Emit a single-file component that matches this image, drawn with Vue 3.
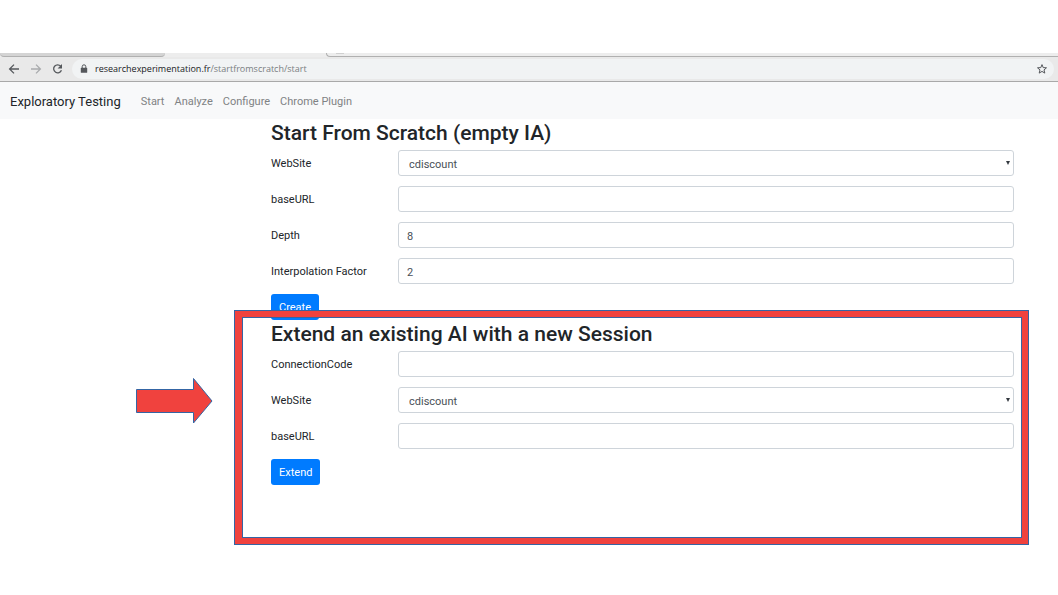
<script setup>
import { ref } from 'vue'

const links = ['Start', 'Analyze', 'Configure', 'Chrome Plugin']
const url = ref({ host: 'researchexperimentation.fr', path: '/startfromscratch/start' })

const scratch = ref([
  { id: 's-site', label: 'WebSite', type: 'select', value: 'cdiscount' },
  { id: 's-url', label: 'baseURL', type: 'text', value: '' },
  { id: 's-depth', label: 'Depth', type: 'text', value: '8' },
  { id: 's-factor', label: 'Interpolation Factor', type: 'text', value: '2' },
])
const extend = ref([
  { id: 'e-code', label: 'ConnectionCode', type: 'text', value: '' },
  { id: 'e-site', label: 'WebSite', type: 'select', value: 'cdiscount' },
  { id: 'e-url', label: 'baseURL', type: 'text', value: '' },
])
const sections = [
  { title: 'Start From Scratch (empty IA)', fields: scratch, action: 'Create', marked: false },
  { title: 'Extend an existing AI with a new Session', fields: extend, action: 'Extend', marked: true },
]
</script>

<template>
  <div class="page">
    <header class="browser">
      <div class="tabs">
        <span class="tab-left"></span>
        <span class="tab-active"></span>
        <span class="tab-right"><i></i></span>
      </div>
      <div class="toolbar">
        <button class="tool" type="button" aria-label="Back">
          <svg viewBox="0 0 12 12"><path d="M11 6H2M6 1.6L1.6 6 6 10.4" /></svg>
        </button>
        <button class="tool dim" type="button" aria-label="Forward">
          <svg viewBox="0 0 12 12"><path d="M1 6h9M6 1.6L10.4 6 6 10.4" /></svg>
        </button>
        <button class="tool" type="button" aria-label="Reload">
          <svg viewBox="0 0 12 12">
            <path d="M8.7 3.2A4 4 0 1 0 9.4 7.200" />
            <path class="solid" d="M10 1v4.400H5.600z" />
          </svg>
        </button>
        <div class="address">
          <svg class="lock" viewBox="0 0 8 10">
            <path class="shackle" d="M2.2 4.4V2.6a1.8 1.8 0 0 1 3.6 0v1.8" />
            <rect x="0.8" y="3.8" width="6.4" height="5" rx="0.6" />
          </svg>
          <span class="url"><b>{{ url.host }}</b>{{ url.path }}</span>
          <button class="star" type="button" aria-label="Bookmark">
            <svg viewBox="0 0 12 12">
              <path d="M6 1.6l1.2 3 3.3.2-2.5 2.1.8 3.2L6 8.4l-2.8 1.7.8-3.2-2.5-2.1 3.3-.2z" />
            </svg>
          </button>
        </div>
      </div>
    </header>

    <nav class="navbar">
      <a class="brand" href="#">Exploratory Testing</a>
      <a v-for="l in links" :key="l" class="nav-link" href="#">{{ l }}</a>
    </nav>

    <main class="content">
      <form
        v-for="s in sections"
        :key="s.title"
        class="section"
        :class="{ marked: s.marked }"
        @submit.prevent
      >
        <h2>{{ s.title }}</h2>
        <div v-for="f in s.fields.value" :key="f.id" class="row">
          <label :for="f.id">{{ f.label }}</label>
          <div v-if="f.type === 'select'" class="select-wrap">
            <select :id="f.id" v-model="f.value" class="control">
              <option>cdiscount</option>
            </select>
            <svg class="caret" viewBox="0 0 4 4"><path d="M0 0h4L2 4z" /></svg>
          </div>
          <input v-else :id="f.id" v-model="f.value" class="control" type="text" />
        </div>
        <button class="submit" type="submit">{{ s.action }}</button>
        <template v-if="s.marked">
          <div class="frame"></div>
          <svg class="arrow" viewBox="0 0 78 48">
            <path d="M1.5 12.5h57V1.5L77 24 58.5 46V35.5h-57z" />
          </svg>
        </template>
      </form>
    </main>
  </div>
</template>

<style>
body {
  margin: 0;
  background: #fff;
}
</style>

<style scoped>
.page {
  padding: 53px 0 50px;
  font-family: Roboto, "Liberation Sans", sans-serif;
  font-size: 11px;
  color: #212529;
}
.page *,
.page *::before {
  box-sizing: border-box;
}
button {
  margin: 0;
  padding: 0;
  border: 0;
  background: none;
  font: inherit;
}
.browser {
  background: #e9e9e9;
  border-bottom: 1px solid #a9a9a9;
}
.tabs {
  display: flex;
  height: 4px;
  background: #ededed;
}
.tab-left {
  width: 165px;
  background: #d4d4d4;
  border-bottom: 1px solid #b0b0b0;
  border-radius: 0 0 4px 4px;
}
.tab-active {
  width: 161px;
  background: #ededed;
}
.tab-right {
  flex: 1;
  border: solid #b0b0b0;
  border-width: 0 0 1px 1px;
  border-radius: 0 0 0 4px;
}
.tab-right i {
  display: block;
  width: 8px;
  height: 1px;
  margin-left: 9px;
  background: #d0d0d0;
}
.toolbar {
  display: flex;
  align-items: center;
  height: 24px;
  padding: 0 4px 0 8px;
}
.tool {
  width: 12px;
  height: 12px;
  margin-right: 10px;
}
.tool svg,
.star svg {
  display: block;
  width: 12px;
  height: 12px;
  fill: none;
  stroke: #55585c;
  stroke-width: 1.3;
}
.star svg {
  stroke-width: 1;
}
.tool.dim svg {
  stroke: #a9abad;
}
.tool .solid {
  fill: #55585c;
  stroke: none;
}
.address {
  display: flex;
  flex: 1;
  align-items: center;
  height: 20px;
  margin-left: -2px;
  padding: 0 6px 0 8px;
  border-radius: 10px;
  background: #f1f3f4;
}
.lock {
  width: 8px;
  height: 10px;
  margin-right: 7px;
  fill: #55585c;
}
.shackle {
  fill: none;
  stroke: #55585c;
}
.url {
  flex: 1;
  font-family: "Open Sans", "Noto Sans", sans-serif;
  font-size: 9px;
  line-height: 20px;
  color: #7a7e82;
}
.url b {
  font-weight: 400;
  color: #202124;
}
.navbar {
  display: flex;
  align-items: center;
  height: 37px;
  padding: 2px 10px 0;
  background: #f8f9fa;
}
.brand {
  margin-right: 20px;
  font-size: 13px;
  color: #212529;
  text-decoration: none;
}
.nav-link {
  margin-right: 10px;
  color: #808284;
  text-decoration: none;
}
.content {
  margin: 0 44px 0 271px;
}
.section {
  position: relative;
}
.section.marked {
  padding-bottom: 60px;
}
h2 {
  margin: 0;
  padding: 1px 0 4px;
  font-size: 21px;
  font-weight: 500;
  line-height: 26px;
}
.row {
  display: flex;
  align-items: center;
  margin-bottom: 10px;
}
.row label {
  width: 127px;
}
.select-wrap {
  position: relative;
  display: flex;
  flex: 1;
}
.control {
  flex: 1;
  min-width: 0;
  width: 100%;
  height: 26px;
  margin: 0;
  padding: 2px 8px 0;
  border: 1px solid #ced4da;
  border-radius: 3px;
  background: #fff;
  font: inherit;
  color: #495057;
  appearance: none;
}
select.control {
  padding: 2px 10px 0;
}
.caret {
  position: absolute;
  top: 11px;
  right: 4px;
  width: 4px;
  height: 4px;
  fill: #343a40;
}
.submit {
  display: block;
  height: 26px;
  padding: 1px 8px 0;
  border-radius: 3px;
  background: #007bff;
  color: #fff;
}
.frame {
  position: absolute;
  top: -10px;
  right: -15px;
  bottom: 0;
  left: -37px;
  border: 8px solid #f0423e;
  border-left-width: 9px;
  outline: 1px solid #3465a4;
  outline-offset: -1px;
  pointer-events: none;
}
.frame::before {
  content: "";
  position: absolute;
  inset: -1px;
  border: 1px solid #3465a4;
}
.arrow {
  position: absolute;
  top: 57px;
  left: -136px;
  width: 78px;
  height: 48px;
  fill: #f0423e;
  stroke: #3465a4;
}
</style>
